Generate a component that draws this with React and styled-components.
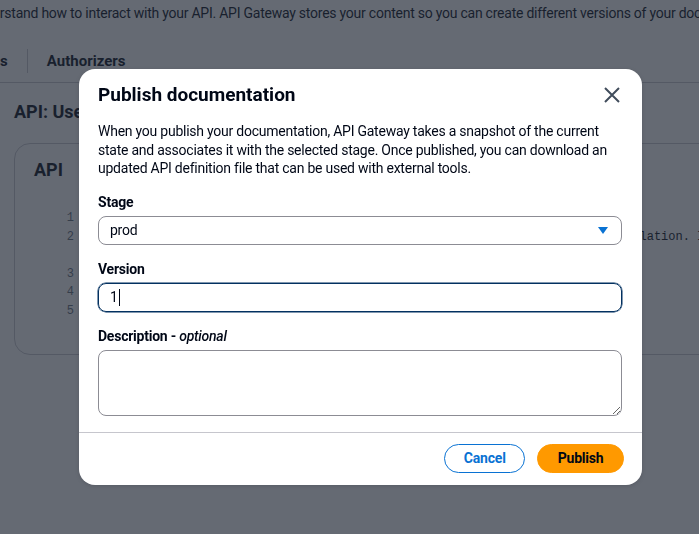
import React from 'react'
import styled, { createGlobalStyle } from 'styled-components'

const GlobalStyle = createGlobalStyle`
    html, body {
        margin: 0;
        padding: 0;
        overflow: hidden;
        background: #ffffff;
    }
    body {
        font-family: Roboto, "Noto Sans", Arial, sans-serif;
        color: #000716;
    }
`

// page behind the dialog
const Page = styled.div`
    width: 1200px;
    height: 534px;
    padding-left: 14px;
    box-sizing: border-box;
`

const Intro = styled.p`
    margin: 3px 0 0 -44px;
    font-size: 14px;
    line-height: 20px;
    letter-spacing: -0.24px;
    white-space: nowrap;
`

const Tabs = styled.div`
    display: flex;
    align-items: center;
    height: 42px;
    margin: 17px 0 0 -14px;
    border-bottom: 1px solid #c6c6cd;
`

const Tab = styled.div`
    font-size: 15px;
    font-weight: 700;
    color: #000716;
    padding: 0 19px;
    margin-left: ${(props) => props.shift || '0'};
`

const TabDivider = styled.div`
    width: 1px;
    height: 24px;
    background: #c6c6cd;
`

const PageTitle = styled.h1`
    margin: 18px 0 0 0;
    font-size: 18px;
    line-height: 22px;
    font-weight: 700;
`

const Card = styled.section`
    margin-top: 20px;
    border: 1px solid #c6c6cd;
    border-radius: 16px;
    padding: 15px 19px 34px 19px;
    height: 212px;
    box-sizing: border-box;
`

const CardTitle = styled.h2`
    margin: 0;
    font-size: 18px;
    line-height: 22px;
    font-weight: 700;
`

const Code = styled.div`
    display: grid;
    grid-template-columns: 40px 800px;
    column-gap: 11px;
    margin-top: 28px;
    font-family: "Liberation Mono", "DejaVu Sans Mono", monospace;
    font-size: 12px;
    line-height: 18.5px;
`

const LineNo = styled.div`
    text-align: right;
    color: #5f6b7a;
`

const LineText = styled.div`
    white-space: pre-wrap;
    word-break: break-all;
`

// dialog
const Overlay = styled.div`
    position: fixed;
    inset: 0;
    background: rgba(35, 43, 55, 0.7);
    padding: 69px 0 0 79px;
`

const Dialog = styled.div`
    width: 563px;
    background: #ffffff;
    border-radius: 16px;
    box-shadow: 0 1px 4px rgba(0, 7, 22, 0.15);
`

const Header = styled.div`
    display: flex;
    align-items: center;
    justify-content: space-between;
    padding: 15px 20px 0 19px;
`

const Title = styled.h2`
    margin: 0;
    font-size: 19px;
    line-height: 22px;
    font-weight: 700;
    color: #000716;
`

const CloseButton = styled.button`
    border: none;
    background: none;
    padding: 0;
    width: 20px;
    height: 20px;
    display: flex;
    align-items: center;
    justify-content: center;
    color: #414d5c;
    cursor: pointer;
`

const Body = styled.div`
    padding: 16px 20px 16px 19px;
    letter-spacing: -0.24px;
`

const Text = styled.p`
    margin: 0;
    font-size: 14px;
    line-height: 18.5px;
    color: #000716;
`

const Field = styled.div`
    margin-top: 15px;
    display: flex;
    flex-direction: column;
    gap: 5px;
`

const Label = styled.label`
    font-size: 14px;
    line-height: 18px;
    font-weight: 700;
    color: #000716;

    em {
        font-weight: 500;
        font-style: italic;
    }
`

const SelectBox = styled.div`
    display: flex;
    align-items: center;
    justify-content: space-between;
    height: 29px;
    box-sizing: border-box;
    padding: 0 13px 0 11px;
    border: 1px solid #8c8c94;
    border-radius: 8px;
    font-size: 14px;
`

const InputBox = styled.div`
    display: flex;
    align-items: center;
    height: 29px;
    box-sizing: border-box;
    padding: 0 11px;
    border: 1px solid #033160;
    box-shadow: 0 0 0 0.5px #033160;
    border-radius: 8px;
    font-size: 14px;
`

const Caret = styled.span`
    display: inline-block;
    width: 1px;
    height: 17px;
    background: #000716;
    margin-left: 1px;
`

const TextArea = styled.textarea`
    display: block;
    width: 100%;
    height: 66px;
    box-sizing: border-box;
    border: 1px solid #8c8c94;
    border-radius: 8px;
    padding: 4px 11px;
    font-family: inherit;
    font-size: 14px;
    resize: vertical;
    outline: none;
`

const Footer = styled.div`
    display: flex;
    justify-content: flex-end;
    gap: 12px;
    padding: 11px 18px 12px 20px;
    border-top: 1px solid #c6c6cd;
`

const Button = styled.button`
    height: 29px;
    padding: 0 ${(props) => props.pad};
    border-radius: 20px;
    font-family: inherit;
    font-size: 14px;
    font-weight: 700;
    letter-spacing: -0.2px;
    cursor: pointer;
    border: 1px solid ${(props) => props.border};
    background: ${(props) => props.bg};
    color: ${(props) => props.color};
`

const CODE = [
    '{',
    '  "description": "This is the API used to demonstrate the documentation translation. It covers the main operations of the API.",',
    '  "version": "1"',
    '}',
    '',
]

const App = () => {
    return (
        <>
            <GlobalStyle />
            <Page>
                <Intro>
                    understand how to interact with your API. API Gateway stores your content so you can create different versions of your documentation.
                </Intro>
                <Tabs>
                    <Tab shift='-61px'>Models</Tab>
                    <TabDivider />
                    <Tab>Authorizers</Tab>
                </Tabs>
                <PageTitle>API: UserService</PageTitle>
                <Card>
                    <CardTitle>API</CardTitle>
                    <Code>
                        {CODE.map((line, i) => (
                            <React.Fragment key={i}>
                                <LineNo>{i + 1}</LineNo>
                                <LineText>{line}</LineText>
                            </React.Fragment>
                        ))}
                    </Code>
                </Card>
            </Page>

            <Overlay>
                <Dialog role='dialog'>
                    <Header>
                        <Title>Publish documentation</Title>
                        <CloseButton aria-label='Close'>
                            <svg width='16' height='16' viewBox='0 0 16 16' fill='none' stroke='currentColor' strokeWidth='2'>
                                <path d='M1 1 L15 15 M15 1 L1 15' />
                            </svg>
                        </CloseButton>
                    </Header>
                    <Body>
                        <Text>
                            When you publish your documentation, API Gateway takes a snapshot of the current state and associates it with the selected stage. Once published, you can download an updated API definition file that can be used with external tools.
                        </Text>
                        <Field>
                            <Label>Stage</Label>
                            <SelectBox>
                                <span>prod</span>
                                <svg width='10' height='7' viewBox='0 0 10 7'>
                                    <path d='M0 0 L10 0 L5 7 Z' fill='#0972d3' />
                                </svg>
                            </SelectBox>
                        </Field>
                        <Field>
                            <Label>Version</Label>
                            <InputBox role='textbox'>
                                1<Caret />
                            </InputBox>
                        </Field>
                        <Field>
                            <Label>Description - <em>optional</em></Label>
                            <TextArea />
                        </Field>
                    </Body>
                    <Footer>
                        <Button pad='18.5px' border='#0972d3' bg='#ffffff' color='#0972d3'>Cancel</Button>
                        <Button pad='19.5px' border='#ff9900' bg='#ff9900' color='#000716'>Publish</Button>
                    </Footer>
                </Dialog>
            </Overlay>
        </>
    )
}

export default App
